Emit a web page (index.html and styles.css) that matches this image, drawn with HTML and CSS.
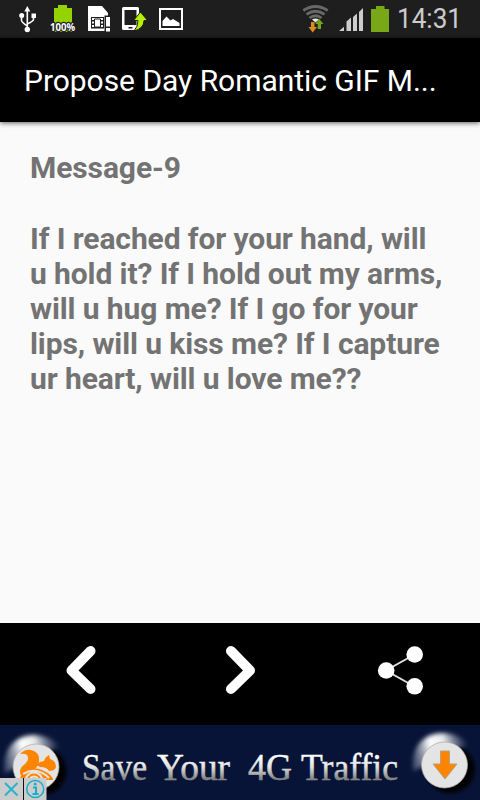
FILE: index.html
```html
<!DOCTYPE html>
<html lang="en">
<head>
<meta charset="utf-8">
<title>Propose Day Romantic GIF Messages</title>
<link rel="stylesheet" href="styles.css">
</head>
<body>
<div class="screen">
  <header class="status">
    <svg class="status-icons" width="190" height="38" viewBox="0 0 190 38">
      <g stroke="#fff" stroke-width="1.6" fill="none">
        <path d="M27.3 9v20M21.5 17v3.5q0 1.5 5.8 5.5M33.5 17v2.500q0 1.500-6.200 4.500"/>
      </g>
      <g fill="#fff"><path d="M27.300 6l3 5.500h-6zM31.500 13.500h4.500v4.500h-4.500z"/><circle cx="21.700" cy="15.500" r="2.500"/><circle cx="27.300" cy="29.500" r="2.700"/></g>
      <path d="M54 8h4V5h9v3h5v24H54z" fill="#94d300"/>
      <text class="percent" x="50" y="31" textLength="25" lengthAdjust="spacingAndGlyphs">100%</text>
      <path d="M88 6h14l6 7v18H88z" fill="#fff"/>
      <rect x="91" y="17" width="13" height="11.500" fill="#1e1e1e"/>
      <path d="M92 18h11v2H92zM92 21.500h11v2H92zM92 25h11v2H92z" fill="#fff"/>
      <path d="M94.500 19h6v8h-6z" fill="#fff" stroke="#1e1e1e"/>
      <path d="M104.500 15.500h7V33h-7z" fill="#1e1e1e"/>
      <path d="M106 17h4v9.500h-4zM106 28h4v3.500h-4z" fill="#fff"/>
      <path fill-rule="evenodd" d="M123.500 7h14q1.500 0 1.500 1.500v20q0 1.500-1.500 1.500h-14q-1.500 0-1.500-1.500v-20q0-1.500 1.500-1.500zM124.500 10v15h12V10zM128.500 27h4v1.500h-4z" fill="#fff"/>
      <path d="M140.500 12l7 8.500H144q0 8-10 10.500 4-4.500 4-10.500h-4.500z" fill="#b5f000" stroke="#1e1e1e" stroke-width="1"/>
      <rect x="160" y="9" width="22" height="20" fill="none" stroke="#fff" stroke-width="2"/>
      <path d="M162.500 26v-5l4-4.500 4 4 2.500-1.500 6.500 4v3z" fill="#fff"/>
    </svg>
    <div class="status-right">
      <svg width="98" height="38" viewBox="300 0 98 38">
        <g fill="none" stroke="#686868" stroke-width="2.800">
          <path d="M303.300 10.500Q315.500 2.500 327.700 10.500M306.500 14.300Q315.500 8.200 324.500 14.300M309.500 18Q315.500 13.500 321.500 18"/>
        </g>
        <path d="M312 19.500q3.500-2 7 0l-3.500 3z" fill="#e8e8e8"/>
        <path d="M311 22h3.500v5h2.500l-4.300 5.500-4.200-5.500h2.500z" fill="#dc8a25"/>
        <path d="M317.700 29v-5h-2.500l4.100-5 4.200 5H321v5z" fill="#76a718"/>
        <path d="M339 31l5-4.300V31zM346.500 31v-9.500l4.500-4V31zM353 31V17l4-3.500V31zM359 31V12l4-4V31z" fill="#ccc"/>
        <path d="M371 9h5V6h8.500v3h4.500v23h-18z" fill="#78a818"/>
      </svg>
      <svg class="clock" width="70" height="38"><text x="-1" y="28" textLength="65" lengthAdjust="spacingAndGlyphs">14:31</text></svg>
    </div>
  </header>
  <div class="titlebar"><h1>Propose Day Romantic GIF M...</h1></div>
  <main class="message">
    <h2>Message-9</h2>
    <p>If I reached for your hand, will<br>u hold it? If I hold out my arms,<br>will u hug me? If I go for your<br>lips, will u kiss me? If I capture<br>ur heart, will u love me??</p>
  </main>
  <nav class="actions">
    <button aria-label="Previous"><svg width="160" height="102" viewBox="0 0 160 102"><path d="M90.500 28L71.500 47.500l19 18.500" class="chevron"/></svg></button>
    <button aria-label="Next"><svg width="160" height="102" viewBox="0 0 160 102"><path d="M71 28l19 19.500L71 66" class="chevron"/></svg></button>
    <button aria-label="Share"><svg width="160" height="102" viewBox="0 0 160 102"><path d="M94.500 31.500l-28.500 16 28.500 16" fill="none" stroke="#ddd" stroke-width="2"/><g fill="#fff"><circle cx="94.700" cy="31.500" r="8.300"/><circle cx="66.200" cy="47.500" r="8.300"/><circle cx="94.700" cy="63.300" r="8.300"/></g></svg></button>
  </nav>
  <footer class="ad">
    <svg width="480" height="75" viewBox="0 0 480 75">
      <defs>
        <linearGradient id="silver" x1="0" y1="0" x2="0" y2="1"><stop offset=".2" stop-color="#fff"/><stop offset=".5" stop-color="#e2e2e2"/><stop offset=".78" stop-color="#858585"/></linearGradient>
        <linearGradient id="shine" x1="0" y1=".6" x2="1" y2=".4"><stop stop-color="#8490a8" stop-opacity=".5"/><stop offset=".35" stop-color="#fff"/><stop offset=".6" stop-color="#fff" stop-opacity=".9"/><stop offset="1" stop-color="#bcc6dd" stop-opacity="0"/></linearGradient>
        <filter id="soft" x="-30%" y="-30%" width="160%" height="160%"><feGaussianBlur stdDeviation="2"/></filter>
      </defs>
      <rect width="480" height="75" fill="#081437"/>
      <g id="badge">
        <circle cx="42" cy="46" r="24" fill="#000" filter="url(#soft)"/>
        <path d="M5 48C1 23 17 9 36 10q16 1 25 12L36 30 13 44z" fill="url(#shine)" filter="url(#soft)"/>
        <circle cx="36" cy="42" r="23" fill="#e4e4e4" stroke="#aaa" stroke-width=".7"/>
      </g>
      <use href="#badge" x="408.500" y="-2"/>
      <path fill="#ff8500" d="M20 29q5-5 11-4 9 2 8 11-1 7-8 11-4 2-5 7-6-2-6-7 0-5 5-8 5-4 2-9-2-2-7-1zM44 36q1-4 5-6l1 4q6 2 6 8-1 4-7 4-2-4-9-4-2-2-5-1 3-4 9-5zM23 60q-6-8 1-12 8-7 18-3 11 5 11 10H44v5z"/>
      <g fill="none" stroke="#e6e6e6" stroke-width="2"><circle cx="34" cy="56" r="4.500"/><circle cx="34" cy="56" r="8.500"/><path d="M23 49q14-8 26 4"/></g>
      <path d="M440.500 26h9v13h7.500L445 54l-12-15h7.500z" fill="#ff8500" stroke="#b5a17d"/>
      <g class="ad-text">
        <text x="82" y="54.500" textLength="65" lengthAdjust="spacingAndGlyphs">Save</text>
        <text x="157" y="54.500" textLength="73" lengthAdjust="spacingAndGlyphs">Your</text>
        <text x="248" y="54.500" textLength="44" lengthAdjust="spacingAndGlyphs">4G</text>
        <text x="301" y="54.500" textLength="97" lengthAdjust="spacingAndGlyphs">Traffic</text>
      </g>
      <path d="M0 53h23v22H0zM24 53h22.500v22H24z" fill="#ccc"/>
      <path d="M23.500 53v22" stroke="#111"/>
      <path d="M5 58l12.500 12.500M17.500 58L5 70.500" stroke="#27b3cd" stroke-width="2"/>
      <circle cx="35.200" cy="64" r="8.500" fill="none" stroke="#16aeca" stroke-width="1.500"/>
      <path d="M33 62.500h3V69M32.500 69h6" fill="none" stroke="#16aeca" stroke-width="2"/><circle cx="35.200" cy="59.200" r="1.400" fill="#16aeca"/>
    </svg>
  </footer>
</div>
</body>
</html>
```
FILE: styles.css
```css
* { box-sizing: border-box; }
body { margin: 0; font-family: Roboto, sans-serif; background: #fafafa; }
.screen { width: 480px; height: 800px; display: flex; flex-direction: column; overflow: hidden; }
svg { display: block; }
.status { height: 38px; background: #1e1e1e; display: flex; justify-content: space-between; }
.status-right { display: flex; width: 180px; }
.percent { font: 700 10px "Open Sans", sans-serif; fill: #fff; stroke: #1e1e1e; stroke-width: 2.5px; paint-order: stroke; stroke-linejoin: round; }
.clock text { font: 400 27px Roboto, sans-serif; fill: #ccc; }
.titlebar { height: 84px; background: #000; color: #fff; padding: 0 24px; display: flex; align-items: center; box-shadow: 0 1px 5px rgba(0, 0, 0, .65); }
h1 { margin: 0; font-size: 30px; font-weight: 400; line-height: 35px; letter-spacing: -.04px; white-space: nowrap; }
.message { flex: 1; padding: 28px 30px 0; color: #737373; }
h2, p { margin: 0; font-size: 30px; font-weight: 700; line-height: 35px; letter-spacing: -.1px; white-space: nowrap; }
p { margin-top: 36px; }
.actions { height: 102px; background: #000; display: flex; }
button { width: 160px; height: 102px; padding: 0; border: 0; background: none; }
.chevron { fill: none; stroke: #fff; stroke-width: 10; stroke-linecap: round; stroke-linejoin: round; }
.ad { height: 75px; }
.ad-text { font: 400 37px "Liberation Serif", serif; fill: url(#silver); stroke: url(#silver); stroke-width: .5; }
```
